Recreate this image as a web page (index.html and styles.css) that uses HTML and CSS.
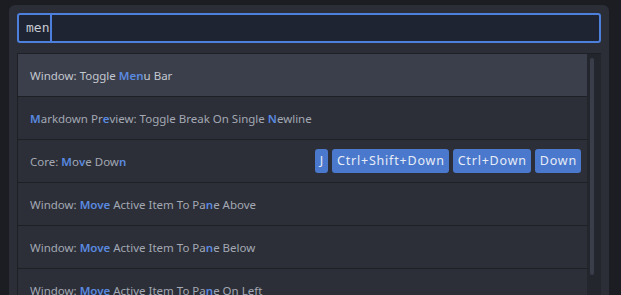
FILE: index.html
```html
<!DOCTYPE html>
<html lang="en">
<head>
    <meta charset="UTF-8">
    <title>Command Palette</title>
    <link rel="stylesheet" href="styles.css">
</head>
<body>
    <div class="palette">
        <!-- Search box -->
        <div class="query">
            <span class="query-text">men</span><span class="cursor"></span>
        </div>

        <div class="results">
            <ul class="list">
                <li class="item selected">
                    <span class="label">Window: Toggle <b>Men</b>u Bar</span>
                </li>
                <li class="item">
                    <span class="label"><b>M</b>arkdown Pr<b>e</b>view: Toggle Break On Single <b>N</b>ewline</span>
                </li>
                <li class="item">
                    <span class="label">Core: <b>M</b>o<b>v</b>e Dow<b>n</b></span>
                    <span class="keys">
                        <kbd>J</kbd>
                        <kbd>Ctrl+Shift+Down</kbd>
                        <kbd>Ctrl+Down</kbd>
                        <kbd>Down</kbd>
                    </span>
                </li>
                <li class="item">
                    <span class="label">Window: <b>Move</b> Active Item To Pa<b>n</b>e Above</span>
                </li>
                <li class="item">
                    <span class="label">Window: <b>Move</b> Active Item To Pa<b>n</b>e Below</span>
                </li>
                <li class="item">
                    <span class="label">Window: <b>Move</b> Active Item To Pa<b>n</b>e On Left</span>
                </li>
            </ul>
            <div class="scrollbar">
                <div class="thumb"></div>
            </div>
        </div>
    </div>
</body>
</html>
```

FILE: styles.css
```css
body {
    margin: 0;
    background-color: #1c1d22;
    font-family: "Noto Sans", sans-serif;
    overflow: hidden;
    height: 295px;
}

.palette {
    margin: 5px 0 0 9px;
    width: 584px;
    height: 300px;
    padding: 8px 8px 0 8px;
    background-color: #2b2e36;
    border-radius: 6px 6px 0 0;
}

.query {
    display: flex;
    align-items: stretch;
    height: 26px;
    padding-left: 7px;
    background-color: #1f2432;
    border: 2px solid #4d80dc;
    border-radius: 3px;
    font-family: "DejaVu Sans Mono", monospace;
    font-size: 13px;
    color: #c6cad2;
}

.query-text {
    line-height: 26px;
}

.cursor {
    width: 2px;
    margin-left: 1px;
    background-color: #4d80dc;
}

.results {
    display: flex;
    margin-top: 10px;
    border: 1px solid #1e2026;
    border-right: none;
    height: 260px;
}

.list {
    flex: 1;
    margin: 0;
    padding: 0;
    list-style: none;
}

.item {
    display: flex;
    align-items: center;
    justify-content: space-between;
    height: 42px;
    padding: 0 6px 0 12px;
    border-bottom: 1px solid #1e2026;
    background-color: #2c2f38;
    font-size: 11.5px;
    color: #a3a8b3;
}

.item.selected {
    background-color: #3b3f4b;
    color: #c3c7cf;
}

.label b {
    font-weight: 600;
    color: #5a8ae0;
}

.keys {
    display: flex;
    gap: 4px;
}

kbd {
    font-family: "Noto Sans", sans-serif;
    font-size: 12.5px;
    letter-spacing: 0.8px;
    line-height: 24px;
    padding: 0 4px 0 5px;
    color: #e6ecf7;
    background-color: #4a78cc;
    border-radius: 3px;
}

.scrollbar {
    width: 11px;
    background-color: #23262d;
    padding: 4px 0 0 3px;
}

.thumb {
    width: 4px;
    height: 217px;
    background-color: #3a3e4a;
    border-radius: 2px;
}
```
